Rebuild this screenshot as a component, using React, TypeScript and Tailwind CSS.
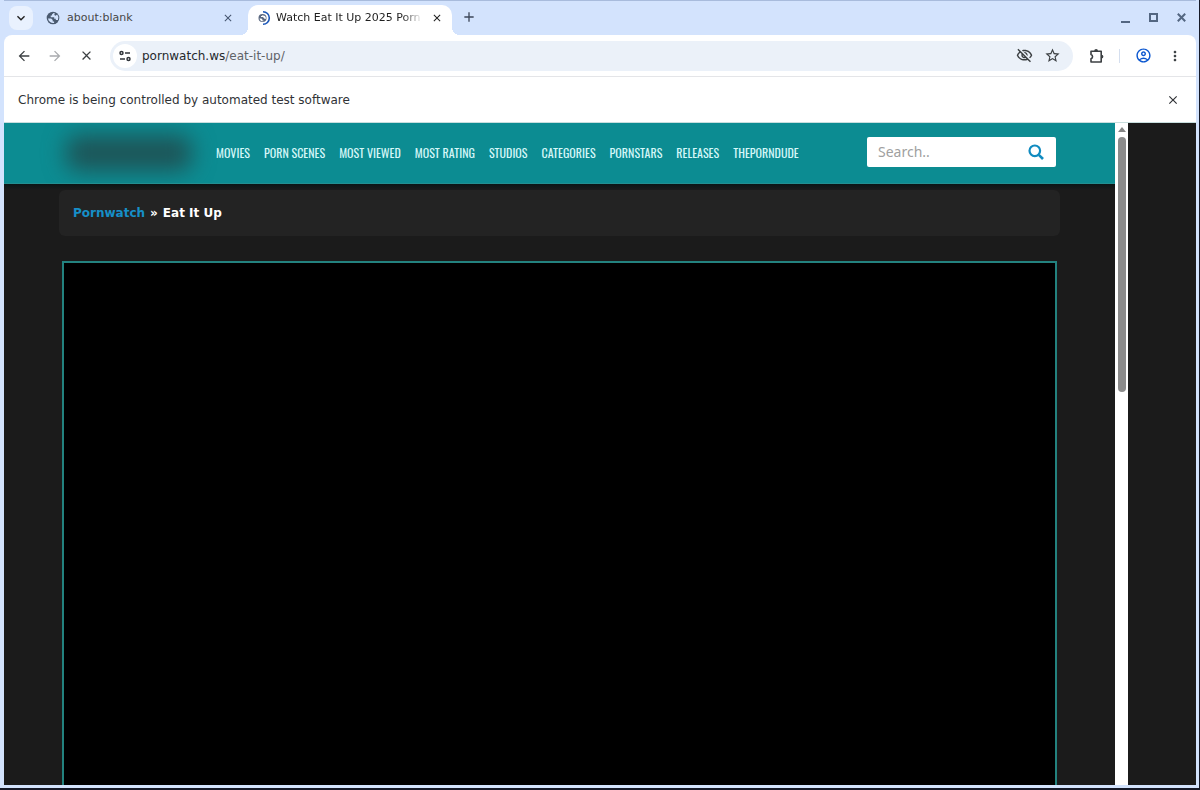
import { useState } from "react";
import {
  MdAdd,
  MdArrowBack,
  MdArrowForward,
  MdClose,
  MdExpandMore,
  MdMoreVert,
  MdOutlineAccountCircle,
  MdOutlineVisibilityOff,
  MdStarBorder,
} from "react-icons/md";

const navLinks = [
  "Movies",
  "Porn Scenes",
  "Most Viewed",
  "Most Rating",
  "Studios",
  "Categories",
  "Pornstars",
  "Releases",
  "ThePornDude",
];

function GlobeIcon() {
  return (
    <svg viewBox="0 0 14 14" className="size-[14px] shrink-0">
      <circle cx="7" cy="7" r="6.300" fill="#4a5a70" />
      <path d="M7.600 2 6 3.400v1.200H4.700v1.600h3.500v1.600h1.600V9h2.100a5 5 0 0 0-.7-5.400L9.500 4.700 8.300 3.900 8.800 2.300Z" fill="#d3e3fd" />
      <path d="M2 7.600h3.200l1.500 1.500v1.400h1.400v1.500A5.200 5.200 0 0 1 2 7.600Z" fill="#d3e3fd" />
    </svg>
  );
}

function LoadingIcon() {
  return (
    <svg viewBox="0 0 16 16" className="size-4 shrink-0" fill="none">
      <circle cx="6.500" cy="8" r="4" fill="#5a6880" />
      <path d="M7 5 5.800 6H5v1h2.400v1h1v1h1.300a3 3 0 0 0-1-3.300l-.9.4Z" fill="#fff" />
      <path d="M3.500 8.500h1.900l1 1v1h1v.7a3.200 3.200 0 0 1-3.900-2.700Z" fill="#fff" />
      <path d="M7 1.700a6.300 6.300 0 0 1 0 12.600" stroke="#1a56b8" strokeWidth="1.600" />
    </svg>
  );
}

function SiteSettingsIcon() {
  return (
    <svg viewBox="0 0 14 14" className="size-[14px]" fill="none" stroke="#30343a" strokeWidth="1.500">
      <circle cx="3.500" cy="4" r="1.500" />
      <path d="M7 4h5M2 10h5" />
      <circle cx="10.500" cy="10" r="1.500" />
    </svg>
  );
}

function ExtensionsIcon() {
  return (
    <svg viewBox="0 0 16 16" className="size-4" fill="none" stroke="#3c4043" strokeWidth="1.600">
      <path d="M2 3.300h10.200V14H2v-3.200a2.200 2.200 0 0 0 0-4.200Z" strokeLinejoin="round" />
      <path d="M5.200 3a1.900 1.900 0 0 1 3.800 0ZM12.500 6.700a1.900 1.900 0 0 1 0 3.800Z" fill="#3c4043" stroke="none" />
    </svg>
  );
}

function SearchIcon() {
  return (
    <svg viewBox="0 0 16 16" className="size-4" fill="none" stroke="#108bc0">
      <circle cx="6.800" cy="6.800" r="5.300" strokeWidth="2.200" />
      <path d="m10.800 10.800 4.200 4.200" strokeWidth="2.600" />
    </svg>
  );
}

function TabStrip() {
  return (
    <div className="flex h-[35px] items-end border-t border-[#a8bbdc] text-[11px] text-[#1f1f1f]">
      <button aria-label="Search tabs" className="mb-[5px] ml-[5px] flex size-6 items-center justify-center rounded-lg bg-[#e9f1fe]">
        <MdExpandMore className="size-4" />
      </button>
      <div className="flex h-[30px] w-[215px] items-center pb-1 pl-[13px]">
        <GlobeIcon />
        <span className="ml-[7px] grow text-[#474747]">about:blank</span>
        <button aria-label="Close about:blank" className="mr-[14px] text-[#44546f]">
          <MdClose className="size-3" />
        </button>
      </div>
      <div className="relative flex h-[30px] w-[204px] items-center rounded-t-[10px] bg-white pb-1 pl-2">
        <span className="absolute bottom-0 -left-2 size-2 bg-[radial-gradient(circle_at_0_0,#d3e3fd_8px,#ffffff_8px)]" />
        <LoadingIcon />
        <span className="ml-1 w-[150px] overflow-hidden whitespace-nowrap mask-r-from-84% mask-r-to-98%">
          Watch Eat It Up 2025 Porn
        </span>
        <button aria-label="Close tab" className="ml-[5px]">
          <MdClose className="size-3" />
        </button>
        <span className="absolute -right-2 bottom-0 size-2 bg-[radial-gradient(circle_at_100%_0,#d3e3fd_8px,#ffffff_8px)]" />
      </div>
      <button aria-label="New tab" className="mb-[10px] ml-[9px] text-[#3c4759]">
        <MdAdd className="size-4" />
      </button>
      <div className="mb-3 ml-auto mr-[10px] flex items-center gap-[19px] text-[#44546f]">
        <button aria-label="Minimize" className="flex h-3 w-[9px] items-end">
          <span className="h-[2px] w-full bg-[#536681]" />
        </button>
        <button aria-label="Maximize" className="size-[9px] border-2 border-[#536681]" />
        <button aria-label="Close window" className="flex">
          <svg viewBox="0 0 9 9" className="size-[9px]" stroke="#536681" strokeWidth="2">
            <path d="m.8.8 7.400 7.400m0-7.400L.8 8.200" />
          </svg>
        </button>
      </div>
    </div>
  );
}

function Toolbar() {
  return (
    <div className="flex h-[42px] items-center rounded-t-lg border-b border-[#e4e5e8] bg-white pr-[13px] pl-3 text-[#3c4043]">
      <button aria-label="Back">
        <MdArrowBack className="size-4" />
      </button>
      <button aria-label="Forward" className="ml-[15px] text-[#a9abae]">
        <MdArrowForward className="size-4" />
      </button>
      <button aria-label="Stop loading" className="ml-4">
        <MdClose className="size-[15px]" />
      </button>
      <div className="ml-4 flex h-[30px] grow items-center rounded-full bg-[#ebf1f9] px-[3px]">
        <button aria-label="Site settings" className="flex size-6 items-center justify-center rounded-full bg-white">
          <SiteSettingsIcon />
        </button>
        <div className="relative ml-1 grow">
          <input
            aria-label="Address"
            defaultValue="pornwatch.ws/eat-it-up/"
            className="w-full bg-transparent text-xs text-transparent outline-none"
          />
          <span aria-hidden="true" className="pointer-events-none absolute inset-0 flex items-center pl-px text-xs text-[#5f6368]">
            <span className="text-[#25282c]">pornwatch.ws</span>/eat-it-up/
          </span>
        </div>
        <button aria-label="Third-party cookies blocked">
          <MdOutlineVisibilityOff className="size-[17px]" />
        </button>
        <button aria-label="Bookmark this tab" className="mr-[9px] ml-[11px]">
          <MdStarBorder className="size-[17px]" />
        </button>
      </div>
      <button aria-label="Extensions" className="ml-4">
        <ExtensionsIcon />
      </button>
      <span className="ml-[14px] h-[14px] w-px bg-[#d5dfef]" />
      <button aria-label="Profile" className="ml-[15px] text-[#0b57d0]">
        <MdOutlineAccountCircle className="size-[17px]" />
      </button>
      <button aria-label="Menu" className="ml-[15px]">
        <MdMoreVert className="size-4" />
      </button>
    </div>
  );
}

function InfoBar() {
  return (
    <div className="flex h-[46px] items-center justify-between border-b border-[#c8dede] bg-white pr-4 pl-[14px] text-xs text-[#303236]">
      <p>Chrome is being controlled by automated test software</p>
      <button aria-label="Dismiss">
        <MdClose className="size-[14px]" />
      </button>
    </div>
  );
}

function SiteHeader() {
  const [query, setQuery] = useState("");

  return (
    <header className="flex h-[61px] shrink-0 items-center overflow-hidden border-b border-[#238f91] bg-[#0c8c92] pr-[59px] pl-[62px]">
      <a href="#" aria-label="Home" className="h-9 w-[126px] rounded-xl bg-[#1d5558] blur-[11px]" />
      <nav className="ml-6 flex gap-[14px] font-['Oswald','Liberation_Sans_Narrow',sans-serif] text-xs whitespace-nowrap text-[#d5f7f8] uppercase">
        {navLinks.map((link) => (
          <a key={link} href="#">
            {link}
          </a>
        ))}
      </nav>
      <form className="mb-[2px] ml-auto flex h-[30px] w-[189px] items-center rounded-xs bg-white pr-3 pl-[11px]">
        <input
          aria-label="Search"
          placeholder="Search.."
          value={query}
          onChange={(e) => setQuery(e.target.value)}
          className="w-0 grow font-['Noto_Sans',sans-serif] text-sm outline-none placeholder:text-[#a0a0a0]"
        />
        <button type="button" aria-label="Submit search">
          <SearchIcon />
        </button>
      </form>
    </header>
  );
}

export default function App() {
  return (
    <div className="flex h-screen flex-col border-r border-b-2 border-[#151927] bg-[#d3e3fd] pr-[3px] pb-[3px] pl-1 font-['DejaVu_Sans',sans-serif]">
      <TabStrip />
      <Toolbar />
      <InfoBar />
      <div className="flex min-h-0 grow bg-[#1b1b1b]">
        <main className="flex min-w-0 grow flex-col">
          <SiteHeader />
          <div className="h-[6px] shrink-0 bg-linear-to-b from-[#0b1516] to-[#1b1b1b]" />
          <div className="mr-[55px] ml-[55px] flex h-[46px] shrink-0 items-center gap-[5px] rounded-md bg-[#232323] pl-[14px] text-xs font-bold text-white">
            <a href="#" className="text-[#168fc8]">
              Pornwatch
            </a>
            <span>»</span>
            <span>Eat It Up</span>
          </div>
          <div className="mt-[25px] mr-[58px] ml-[58px] grow border-2 border-b-0 border-[#23827f] bg-black" />
        </main>
        <div className="flex w-[13px] shrink-0 flex-col items-center bg-white pt-1">
          <svg viewBox="0 0 8 5" className="h-[5px] w-2" fill="#858585">
            <path d="M4 0 8 5H0Z" />
          </svg>
          <div className="mt-[5px] h-[255px] w-2 rounded-full bg-[#8b8b8b]" />
        </div>
        <div className="w-[68px] shrink-0" />
      </div>
    </div>
  );
}
